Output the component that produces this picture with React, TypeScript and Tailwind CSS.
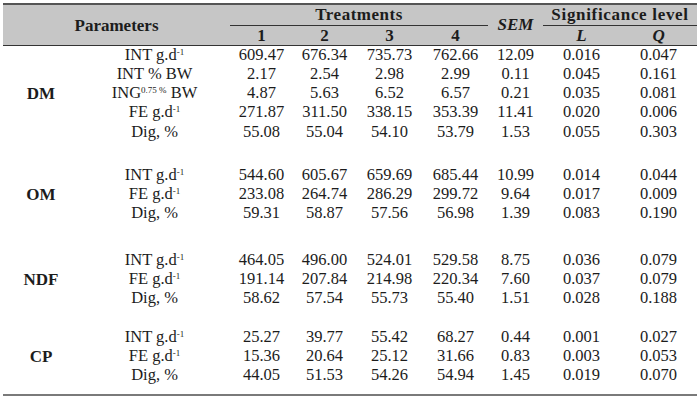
import React from "react";

type Row = { label: React.ReactNode; values: string[] };
type Group = { name: string; rows: Row[]; gap: string };

const gd = (p: string) => (
  <>
    {p} g.d<sup className="-top-[0.55em] text-[9px]">-1</sup>
  </>
);

const groups: Group[] = [
  {
    name: "DM",
    gap: "",
    rows: [
      { label: gd("INT"), values: ["609.47", "676.34", "735.73", "762.66", "12.09", "0.016", "0.047"] },
      { label: "INT % BW", values: ["2.17", "2.54", "2.98", "2.99", "0.11", "0.045", "0.161"] },
      {
        label: (
          <>
            ING<sup className="-top-[0.6em] text-[9px]">0.75 %</sup> BW
          </>
        ),
        values: ["4.87", "5.63", "6.52", "6.57", "0.21", "0.035", "0.081"],
      },
      { label: gd("FE"), values: ["271.87", "311.50", "338.15", "353.39", "11.41", "0.020", "0.006"] },
      { label: "Dig, %", values: ["55.08", "55.04", "54.10", "53.79", "1.53", "0.055", "0.303"] },
    ],
  },
  {
    name: "OM",
    gap: "h-[24px]",
    rows: [
      { label: gd("INT"), values: ["544.60", "605.67", "659.69", "685.44", "10.99", "0.014", "0.044"] },
      { label: gd("FE"), values: ["233.08", "264.74", "286.29", "299.72", "9.64", "0.017", "0.009"] },
      { label: "Dig, %", values: ["59.31", "58.87", "57.56", "56.98", "1.39", "0.083", "0.190"] },
    ],
  },
  {
    name: "NDF",
    gap: "h-[27px]",
    rows: [
      { label: gd("INT"), values: ["464.05", "496.00", "524.01", "529.58", "8.75", "0.036", "0.079"] },
      { label: gd("FE"), values: ["191.14", "207.84", "214.98", "220.34", "7.60", "0.037", "0.079"] },
      { label: "Dig, %", values: ["58.62", "57.54", "55.73", "55.40", "1.51", "0.028", "0.188"] },
    ],
  },
  {
    name: "CP",
    gap: "h-[19px]",
    rows: [
      { label: gd("INT"), values: ["25.27", "39.77", "55.42", "68.27", "0.44", "0.001", "0.027"] },
      { label: gd("FE"), values: ["15.36", "20.64", "25.12", "31.66", "0.83", "0.003", "0.053"] },
      { label: "Dig, %", values: ["44.05", "51.53", "54.26", "54.94", "1.45", "0.019", "0.070"] },
    ],
  },
];

export default function App() {
  return (
    <div className="min-h-[400px] w-[700px] bg-white pl-[3px] pt-[3px] text-[#1c1c1c] [font-family:'Liberation_Serif',serif]">
      <table className="w-[694px] table-fixed border-collapse text-center text-[16.5px] leading-none">
        <colgroup>
          <col className="w-[76px]" />
          <col className="w-[151px]" />
          <col className="w-[63px]" />
          <col className="w-[63px]" />
          <col className="w-[67px]" />
          <col className="w-[65px]" />
          <col className="w-[55px]" />
          <col className="w-[77px]" />
          <col className="w-[77px]" />
        </colgroup>
        <thead className="bg-[#c6c6c6] text-[17px] font-bold">
          <tr className="h-[21px] border-t-2 border-[#555]">
            <th rowSpan={2} colSpan={2} className="pt-[1px]">
              Parameters
            </th>
            <th colSpan={4} className="border-b border-[#333] tracking-[0.03em]">
              Treatments
            </th>
            <th rowSpan={2} className="italic">
              SEM
            </th>
            <th colSpan={2} className="whitespace-nowrap border-b border-[#333] tracking-[0.04em]">
              Significance level
            </th>
          </tr>
          <tr className="h-[20px] border-b border-[#333]">
            <th>1</th>
            <th>2</th>
            <th>3</th>
            <th>4</th>
            <th className="italic">L</th>
            <th className="italic">Q</th>
          </tr>
        </thead>
        <tbody className="border-b-2 border-[#7a7a7a]">
          {groups.map((g) => (
            <React.Fragment key={g.name}>
              {g.gap && (
                <tr className={g.gap}>
                  <td colSpan={9} />
                </tr>
              )}
              {g.rows.map((r, ri) => (
                <tr key={ri} className="h-[19.3px]">
                  {ri === 0 && (
                    <td rowSpan={g.rows.length} className="align-middle text-[17px] font-bold">
                      {g.name}
                    </td>
                  )}
                  <td className="whitespace-nowrap">{r.label}</td>
                  {r.values.map((v, vi) => (
                    <td key={vi}>{v}</td>
                  ))}
                </tr>
              ))}
            </React.Fragment>
          ))}
          <tr className="h-[10px]">
            <td colSpan={9} />
          </tr>
        </tbody>
      </table>
    </div>
  );
}
